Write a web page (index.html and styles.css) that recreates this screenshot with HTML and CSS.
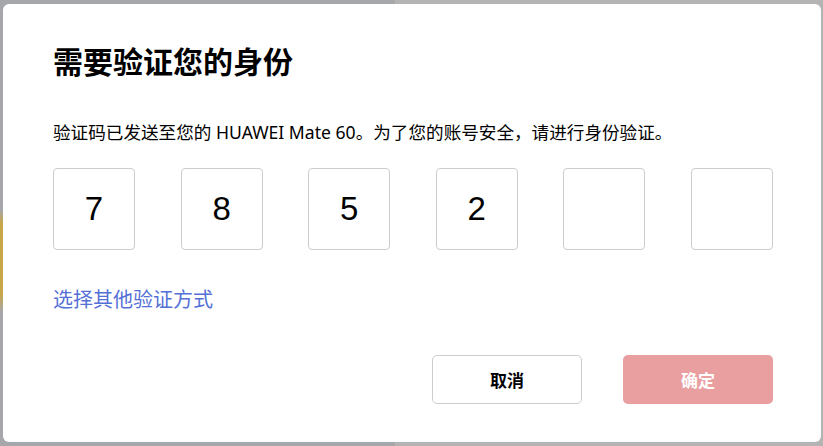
FILE: index.html
```html
<!DOCTYPE html>
<html lang="zh-CN">
<head>
  <meta charset="UTF-8" />
  <meta name="viewport" content="width=device-width, initial-scale=1.0" />
  <title>需要验证您的身份</title>
  <link rel="stylesheet" href="styles.css">
</head>
<body>
  <!-- Verify dialog -->
  <div class="dialog">
    <h1 class="title">需要验证您的身份</h1>
    <p class="desc">验证码已发送至您的 HUAWEI Mate 60。为了您的账号安全，请进行身份验证。</p>

    <div class="codes">
      <div class="code">7</div>
      <div class="code">8</div>
      <div class="code">5</div>
      <div class="code">2</div>
      <div class="code"></div>
      <div class="code"></div>
    </div>

    <a class="other" href="#">选择其他验证方式</a>

    <div class="actions">
      <button class="btn btn-cancel">取消</button>
      <button class="btn btn-ok">确定</button>
    </div>
  </div>
</body>
</html>
```

FILE: styles.css
```css
body {
  margin: 0;
  height: 446px;
  overflow: hidden;
  font-family: 'Noto Sans', 'Noto Sans CJK SC', sans-serif;
  background:
    linear-gradient(to bottom, transparent 47%, #c9a54a 50%, #c9a54a 66%, transparent 70%) left / 3px 100% no-repeat,
    linear-gradient(to right, #a5a7ab 0, #a5a7ab 48%, #b4b4b4 48%, #b4b4b4 100%);
}

.dialog {
  box-sizing: border-box;
  width: 818px;
  height: 438px;
  margin: 4px 2px 4px 3px;
  padding: 38px 48px 0 50px;
  background: #fff;
  border-radius: 6px;
}

.title {
  margin: 0;
  font-size: 30px;
  line-height: 40px;
  font-weight: 700;
  color: #000;
}

.desc {
  margin: 38px 0 0;
  font-size: 17.6px;
  line-height: 24px;
  color: #000;
}

.codes {
  display: flex;
  justify-content: space-between;
  margin-top: 24px;
}
.code {
  box-sizing: border-box;
  width: 82px;
  height: 82px;
  border: 1px solid #cccccc;
  border-radius: 4px;
  display: flex;
  align-items: center;
  justify-content: center;
  font-family: 'Liberation Sans', sans-serif;
  font-size: 33px;
  color: #000;
}

.other {
  display: inline-block;
  margin-top: 36px;
  font-size: 20px;
  line-height: 28px;
  color: #5470d6;
  text-decoration: none;
}

.actions {
  display: flex;
  justify-content: flex-end;
  gap: 41px;
  margin-top: 41px;
}
.btn {
  box-sizing: border-box;
  width: 150px;
  height: 49px;
  border-radius: 5px;
  font-family: 'Noto Sans CJK SC', sans-serif;
  font-size: 17px;
  font-weight: 700;
}
.btn-cancel {
  background: #fff;
  border: 1px solid #cccccc;
  color: #000;
}
.btn-ok {
  background: #e99ea0;
  border: none;
  color: #fff;
}
```
